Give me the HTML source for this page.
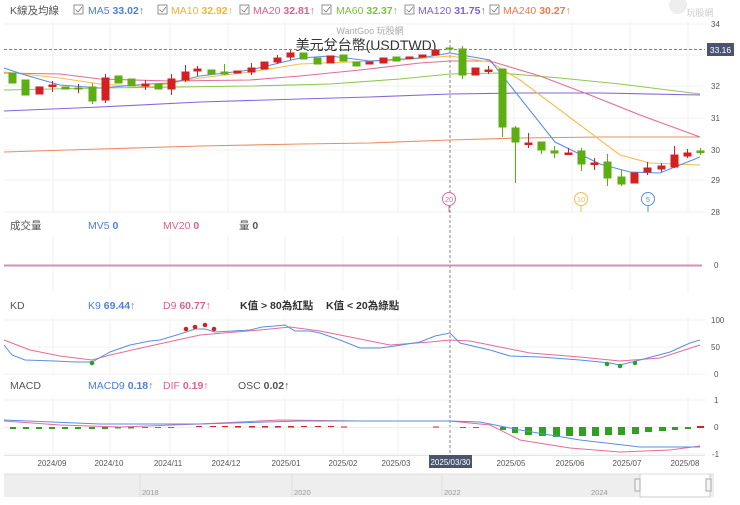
<!DOCTYPE html>
<html><head><meta charset="utf-8"><style>
html,body{margin:0;padding:0;background:#fff;width:740px;height:505px;overflow:hidden}
svg{display:block;font-family:"Liberation Sans","Noto Sans CJK TC",sans-serif}
</style></head><body>
<svg width="740" height="505" viewBox="0 0 740 505" xmlns="http://www.w3.org/2000/svg">
<!-- legend -->
<g font-size="10.5">
<text x="10" y="14" fill="#555">K線及均線</text>
<g fill="none" stroke="#777" stroke-width="0.8">
<rect x="74" y="5" width="9" height="9"/><rect x="158" y="5" width="9" height="9"/><rect x="240" y="5" width="9" height="9"/><rect x="322" y="5" width="9" height="9"/><rect x="405" y="5" width="9" height="9"/><rect x="490" y="5" width="9" height="9"/>
<path d="M75.5 9.5l2.5 2.5 4-5M159.5 9.5l2.5 2.5 4-5M241.5 9.5l2.5 2.5 4-5M323.5 9.5l2.5 2.5 4-5M406.5 9.5l2.5 2.5 4-5M491.5 9.5l2.5 2.5 4-5"/>
</g>
<text x="88" y="14" fill="#4a7fe0">MA5 <tspan font-weight="bold">33.02</tspan>↑</text>
<text x="171" y="14" fill="#f5b335">MA10 <tspan font-weight="bold">32.92</tspan>↑</text>
<text x="253" y="14" fill="#e0608f">MA20 <tspan font-weight="bold">32.81</tspan>↑</text>
<text x="336" y="14" fill="#7cc13a">MA60 <tspan font-weight="bold">32.37</tspan>↑</text>
<text x="418" y="14" fill="#7e5fe0">MA120 <tspan font-weight="bold">31.75</tspan>↑</text>
<text x="503" y="14" fill="#f07a4a">MA240 <tspan font-weight="bold">30.27</tspan>↑</text>
</g>
<text x="700" y="16" font-size="9" fill="#ccc" text-anchor="middle">玩股網</text>
<circle cx="678" cy="5" r="9" fill="#eee"/>
<!-- grids -->
<g stroke="#f0f0f0" stroke-width="1">
<path d="M53 22V212M110 22V212M170 22V212M228 22V212M285 22V212M343 22V212M398 22V212M514 22V212M572 22V212M630 22V212M688 22V212"/>
<path d="M4 24H705M4 55H705M4 86H705M4 118H705M4 150H705M4 180H705M4 212H705"/>
<path d="M53 236V290M110 236V290M170 236V290M228 236V290M285 236V290M343 236V290M398 236V290M514 236V290M572 236V290M630 236V290M688 236V290"/>
<path d="M53 318V375M110 318V375M170 318V375M228 318V375M285 318V375M343 318V375M398 318V375M514 318V375M572 318V375M630 318V375M688 318V375M4 320H705M4 347H705M4 374H705"/>
<path d="M53 398V455M110 398V455M170 398V455M228 398V455M285 398V455M343 398V455M398 398V455M514 398V455M572 398V455M630 398V455M688 398V455M4 400H705M4 454H705"/>
</g>
<!-- axis labels -->
<g font-size="8" fill="#555">
<text x="711" y="27">34</text><text x="711" y="89">32</text><text x="711" y="121">31</text><text x="711" y="153">30</text><text x="711" y="183">29</text><text x="711" y="215">28</text>
<text x="714" y="268">0</text>
<text x="711" y="323">100</text><text x="711" y="350">50</text><text x="714" y="377">0</text>
<text x="714" y="403">1</text><text x="714" y="430">0</text><text x="712" y="457">-1</text>
</g>
<text x="370" y="34" font-size="9" fill="#aaa" text-anchor="middle">WantGoo 玩股網</text>
<text x="366" y="50" font-size="14" fill="#333" text-anchor="middle">美元兌台幣(USDTWD)</text>
<!-- crosshair -->
<path d="M4 49.5H705" stroke="#555" stroke-dasharray="3,2" stroke-width="0.8"/>
<rect x="707" y="43" width="27" height="13" fill="#4a5370"/>
<text x="720.5" y="53" font-size="8.5" fill="#fff" text-anchor="middle">33.16</text>
<path d="M450 40V455" stroke="#666" stroke-dasharray="3,2" stroke-width="0.8"/>
<!-- MAs -->
<g fill="none" stroke-width="1.1">
<polyline stroke="#f08a60" points="4,152 100,149 200,146 300,144 370,143 450,140 520,138 600,137 700,137"/>
<polyline stroke="#8a64e0" points="4,111 100,107 200,102 300,99 370,97 450,94 520,93 600,93 700,95"/>
<polyline stroke="#8ec850" points="4,90 100,88 250,86 330,84 400,79 450,74 500,73 560,78 620,84 700,94"/>
<polyline stroke="#e66b9a" points="4,73 60,74 100,79 170,81 250,80 300,76 360,70 420,63 450,61 490,61 540,76 590,95 640,115 700,137"/>
<polyline stroke="#f7bd4a" points="4,72 60,78 100,84 150,87 200,78 250,72 300,64 350,62 400,60 450,56 490,62 520,80 580,125 620,155 650,163 700,165"/>
<polyline stroke="#5a8ee6" points="4,68 25,75 60,85 100,88 150,84 170,83 200,76 250,70 300,58 330,56 370,61 420,58 450,53 490,60 555,142 600,164 630,172 660,173 700,157"/>
</g>
<!-- candles -->
<g stroke-width="1">
<g fill="#5cae12" stroke="#5cae12">
<rect x="9" y="73" width="7" height="10"/><rect x="22" y="80" width="7" height="15"/><rect x="62" y="87" width="7" height="2"/><rect x="75" y="88" width="7" height="1"/><rect x="89" y="87" width="7" height="14"/><line x1="92.5" y1="83" x2="92.5" y2="104"/><rect x="115" y="76" width="7" height="7"/><rect x="128" y="79" width="7" height="7"/><rect x="155" y="84" width="7" height="5"/><rect x="208" y="70" width="7" height="4"/><rect x="221" y="72" width="7" height="2"/><line x1="224.5" y1="64" x2="224.5" y2="75"/><rect x="300" y="53" width="7" height="6"/><rect x="314" y="58" width="7" height="6"/><rect x="340" y="55" width="7" height="6"/><rect x="353" y="62" width="7" height="4"/><rect x="393" y="57" width="7" height="4"/><rect x="446" y="48" width="7" height="1"/><rect x="459" y="49" width="7" height="26"/><line x1="462.5" y1="46" x2="462.5" y2="79"/><rect x="499" y="69" width="7" height="58"/><line x1="502.5" y1="69" x2="502.5" y2="137"/><rect x="512" y="128" width="7" height="14"/><line x1="515.5" y1="126" x2="515.5" y2="183"/><rect x="538" y="142" width="7" height="8"/><line x1="541.5" y1="142" x2="541.5" y2="154"/><rect x="551" y="151" width="7" height="2"/><line x1="554.5" y1="146" x2="554.5" y2="158"/><rect x="578" y="151" width="7" height="13"/><line x1="581.5" y1="148" x2="581.5" y2="171"/><rect x="604" y="162" width="7" height="16"/><line x1="607.5" y1="154" x2="607.5" y2="186"/><rect x="618" y="177" width="7" height="7"/><line x1="621.5" y1="170" x2="621.5" y2="186"/><rect x="697" y="151" width="7" height="1.5"/><line x1="700.5" y1="148" x2="700.5" y2="155"/>
</g>
<g fill="#d42020" stroke="#d42020">
<rect x="36" y="87" width="7" height="7"/><rect x="49" y="85" width="7" height="1.5"/><line x1="52.5" y1="81" x2="52.5" y2="92"/><line x1="78.5" y1="84" x2="78.5" y2="93"/><rect x="102" y="78" width="7" height="22"/><line x1="105.5" y1="74" x2="105.5" y2="103"/><rect x="142" y="84" width="7" height="2"/><line x1="145.5" y1="80" x2="145.5" y2="90"/><rect x="168" y="79" width="7" height="10"/><line x1="171.5" y1="74" x2="171.5" y2="95"/><rect x="182" y="72" width="7" height="8"/><line x1="185.5" y1="65" x2="185.5" y2="82"/><rect x="194" y="69" width="7" height="2"/><line x1="197.5" y1="66" x2="197.5" y2="76"/><rect x="234" y="71" width="7" height="2"/><rect x="248" y="68" width="7" height="4"/><line x1="251.5" y1="63" x2="251.5" y2="75"/><rect x="261" y="62" width="7" height="7"/><rect x="274" y="58" width="7" height="4"/><line x1="277.5" y1="55" x2="277.5" y2="64"/><rect x="287" y="53" width="7" height="4"/><line x1="290.5" y1="50" x2="290.5" y2="60"/><rect x="327" y="56" width="7" height="7"/><rect x="366" y="62" width="7" height="2"/><rect x="380" y="58" width="7" height="5"/><rect x="406" y="57" width="7" height="1.5"/><rect x="419" y="55" width="7" height="2"/><rect x="432" y="50" width="7" height="5"/><rect x="472" y="68" width="7" height="7"/><rect x="485" y="70" width="7" height="1.5"/><line x1="488.5" y1="66" x2="488.5" y2="74"/><rect x="525" y="143" width="7" height="1.5"/><line x1="528.5" y1="133" x2="528.5" y2="148"/><rect x="565" y="153" width="7" height="1.5"/><line x1="568.5" y1="148" x2="568.5" y2="155"/><rect x="591" y="163" width="7" height="1.5"/><line x1="594.5" y1="158" x2="594.5" y2="170"/><rect x="631" y="173" width="7" height="10"/><rect x="644" y="168" width="7" height="4"/><line x1="647.5" y1="162" x2="647.5" y2="175"/><rect x="658" y="166" width="7" height="3"/><line x1="661.5" y1="163" x2="661.5" y2="172"/><rect x="671" y="155" width="7" height="12"/><line x1="674.5" y1="146" x2="674.5" y2="168"/><rect x="684" y="153" width="7" height="3"/><line x1="687.5" y1="149" x2="687.5" y2="158"/>
</g>
</g>
<!-- markers -->
<g fill="#fff" stroke-width="1" font-size="7.5" text-anchor="middle">
<path d="M449 206V212" stroke="#e66b9a"/><circle cx="449" cy="199" r="6.5" stroke="#e66b9a"/><text x="449" y="202" fill="#e66b9a" stroke="none">20</text>
<path d="M581 206V212" stroke="#f7bd4a"/><circle cx="581" cy="199" r="6.5" stroke="#f7bd4a"/><text x="581" y="202" fill="#f7bd4a" stroke="none">10</text>
<path d="M648 206V212" stroke="#5a8ee6"/><circle cx="648" cy="199" r="6.5" stroke="#5a8ee6"/><text x="648" y="202" fill="#5a8ee6" stroke="none">5</text>
</g>
<!-- volume -->
<g font-size="10.5">
<text x="10" y="229" fill="#555">成交量</text>
<text x="88" y="229" fill="#4a7fe0">MV5 <tspan font-weight="bold">0</tspan></text>
<text x="163" y="229" fill="#e0608f">MV20 <tspan font-weight="bold">0</tspan></text>
<text x="239" y="229" fill="#555">量 <tspan font-weight="bold">0</tspan></text>
</g>
<path d="M4 265.5H702" stroke="#c894b8" stroke-width="2"/>
<!-- KD -->
<g font-size="10.5">
<text x="10" y="309" fill="#555">KD</text>
<text x="88" y="309" fill="#4a7fe0">K9 <tspan font-weight="bold">69.44</tspan>↑</text>
<text x="163" y="309" fill="#e0608f">D9 <tspan font-weight="bold">60.77</tspan>↑</text>
<text x="240" y="309" fill="#333" font-weight="bold">K值 &gt; 80為紅點</text>
<text x="326" y="309" fill="#333" font-weight="bold">K值 &lt; 20為綠點</text>
</g>
<g fill="none" stroke-width="1">
<polyline stroke="#e66b9a" points="4,340 30,350 60,356 92,360 110,355 150,346 200,335 260,330 290,327 320,331 360,339 390,345 430,342 450,340 470,341 500,347 530,353 580,357 620,361 660,358 700,345"/>
<polyline stroke="#5a8ee6" points="4,345 12,355 25,360 55,361 75,362 92,362 110,352 130,345 150,341 160,340 180,334 195,329 205,329 215,332 250,330 262,327 275,326 285,325 295,331 310,331 320,333 340,340 360,348 380,348 395,346 420,342 435,336 450,333 460,343 490,350 510,356 540,357 580,360 610,363 620,365 640,360 670,352 690,343 700,340"/>
</g>
<g fill="#d42020"><circle cx="186" cy="329" r="2.3"/><circle cx="195" cy="327" r="2.3"/><circle cx="205" cy="325" r="2.3"/><circle cx="214" cy="329" r="2.3"/></g>
<g fill="#2fa020"><circle cx="92" cy="363" r="2.3"/><circle cx="607" cy="364" r="2.3"/><circle cx="620" cy="366" r="2.3"/><circle cx="635" cy="363" r="2.3"/></g>
<!-- MACD -->
<g font-size="10.5">
<text x="10" y="389" fill="#555">MACD</text>
<text x="88" y="389" fill="#4a7fe0">MACD9 <tspan font-weight="bold">0.18</tspan>↑</text>
<text x="163" y="389" fill="#e0608f">DIF <tspan font-weight="bold">0.19</tspan>↑</text>
<text x="238" y="389" fill="#555">OSC <tspan font-weight="bold">0.02</tspan>↑</text>
</g>
<path d="M4 427.5H705" stroke="#eee"/>
<g fill="#2fa020">
<rect x="10" y="427" width="6" height="2"/><rect x="23" y="427" width="6" height="2"/><rect x="36" y="427" width="6" height="2"/><rect x="49" y="427" width="6" height="2"/><rect x="62" y="427" width="6" height="2"/><rect x="75" y="427" width="6" height="2"/><rect x="89" y="427" width="6" height="2"/><rect x="102" y="427" width="6" height="2"/><rect x="115" y="427" width="6" height="1.5"/><rect x="128" y="427" width="6" height="1.5"/><rect x="142" y="427" width="6" height="1"/><rect x="155" y="427" width="6" height="1"/><rect x="168" y="427" width="6" height="1"/>
<rect x="460" y="427" width="6" height="1"/><rect x="473" y="427" width="6" height="1"/>
<rect x="500" y="427" width="6" height="3"/><rect x="512" y="427" width="6" height="6"/><rect x="525" y="427" width="7" height="8"/><rect x="539" y="427" width="7" height="9"/><rect x="553" y="427" width="7" height="10"/><rect x="566" y="427" width="7" height="9"/><rect x="579" y="427" width="7" height="9"/><rect x="592" y="427" width="7" height="9"/><rect x="605" y="427" width="7" height="8"/><rect x="618" y="427" width="7" height="8"/><rect x="632" y="427" width="7" height="7"/><rect x="645" y="427" width="7" height="5"/><rect x="659" y="427" width="7" height="4"/><rect x="672" y="427" width="6" height="3"/><rect x="685" y="427" width="6" height="2"/>
</g>
<g fill="#d42020">
<rect x="196" y="426" width="6" height="1"/><rect x="210" y="426" width="6" height="1"/><rect x="222" y="426" width="6" height="1"/><rect x="235" y="426" width="6" height="1.5"/><rect x="249" y="426" width="6" height="1.5"/><rect x="262" y="426" width="6" height="1.5"/><rect x="275" y="426" width="6" height="1.5"/><rect x="288" y="426" width="6" height="1.5"/><rect x="301" y="426" width="6" height="1"/><rect x="315" y="426" width="6" height="1"/><rect x="328" y="426" width="6" height="1"/><rect x="341" y="426.5" width="6" height="1"/><rect x="433" y="426.5" width="6" height="1"/><rect x="697" y="426" width="7" height="2"/>
</g>
<g fill="none" stroke-width="1">
<polyline stroke="#e66b9a" points="4,421 60,425 120,427 200,424 280,420 360,421 450,421 490,425 520,440 570,448 620,452 670,450 700,446"/>
<polyline stroke="#5a8ee6" points="4,420 100,424 200,424 300,421 450,421 480,422 520,430 580,440 640,447 700,447"/>
</g>
<!-- x axis -->
<path d="M4 455.5H705" stroke="#e6e6e6"/>
<g font-size="8" fill="#555" text-anchor="middle">
<text x="52" y="466">2024/09</text><text x="109" y="466">2024/10</text><text x="168" y="466">2024/11</text><text x="226" y="466">2024/12</text><text x="286" y="466">2025/01</text><text x="343" y="466">2025/02</text><text x="396" y="466">2025/03</text><text x="511" y="466">2025/05</text><text x="570" y="466">2025/06</text><text x="627" y="466">2025/07</text><text x="685" y="466">2025/08</text>
</g>
<rect x="429" y="455" width="43" height="13" fill="#4a5370"/>
<text x="450.5" y="465" font-size="8" fill="#fff" text-anchor="middle">2025/03/30</text>
<!-- navigator -->
<rect x="4" y="474" width="710" height="23" fill="#eeeeee"/>
<rect x="640" y="474" width="70" height="23" fill="#fff"/>
<path d="M4 474H714M140 474V497M292 474V497M442 474V497" stroke="#ddd"/>
<path d="M640 474V497H710V474" stroke="#ccc" fill="none"/>
<g font-size="7.5" fill="#999"><text x="142" y="495">2018</text><text x="294" y="495">2020</text><text x="444" y="495">2022</text><text x="591" y="495">2024</text></g>
<rect x="635" y="479" width="5" height="12" fill="#f4f4f4" stroke="#aaa"/>
<rect x="706" y="479" width="5" height="12" fill="#f4f4f4" stroke="#aaa"/>
</svg>
</body></html>
